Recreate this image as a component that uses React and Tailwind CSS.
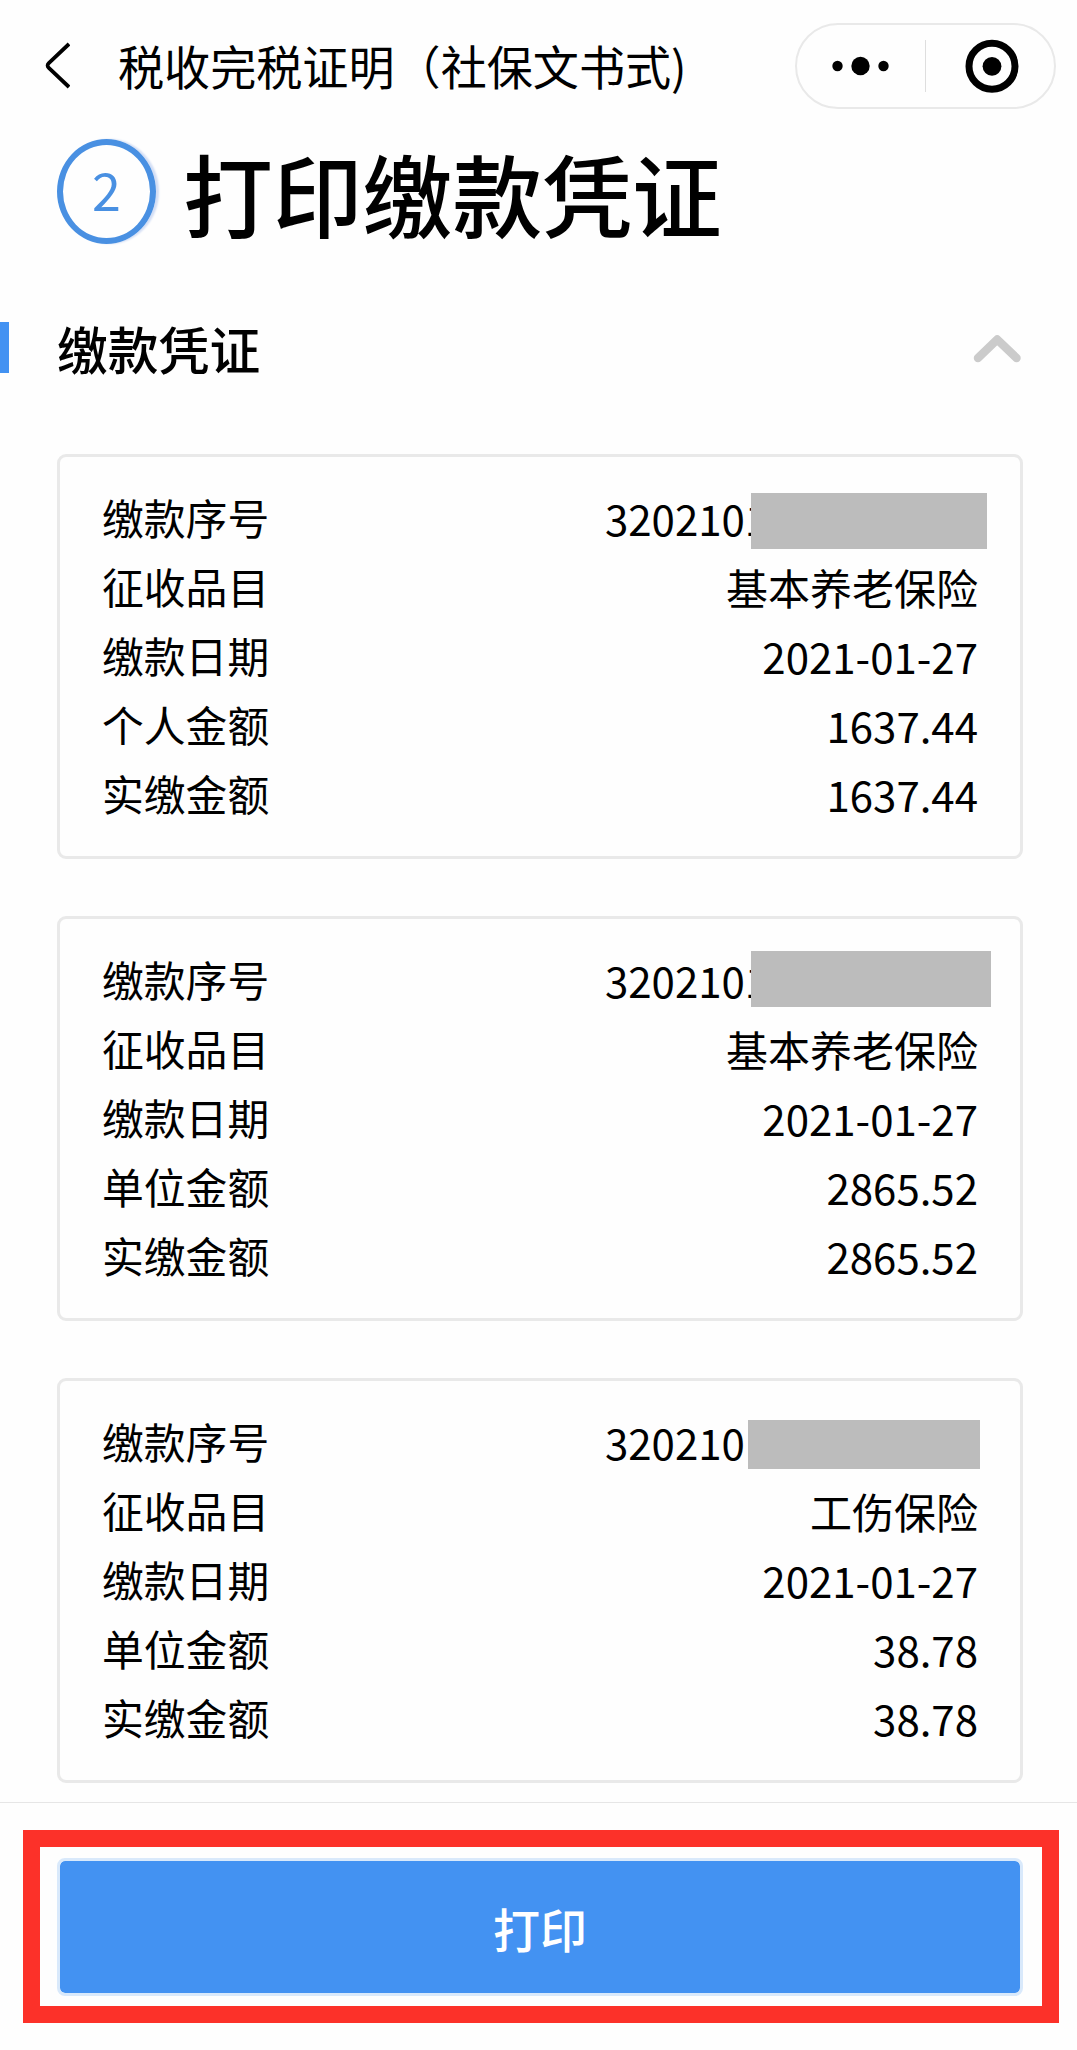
const vouchers = [
  {
    number: '3202101',
    mask: 'left-[146px] top-[10px] h-[56px] w-[236px]',
    rows: [
      ['征收品目', '基本养老保险'],
      ['缴款日期', '2021-01-27'],
      ['个人金额', '1637.44'],
      ['实缴金额', '1637.44'],
    ],
  },
  {
    number: '3202101',
    mask: 'left-[146px] top-[6px] h-[56px] w-[240px]',
    rows: [
      ['征收品目', '基本养老保险'],
      ['缴款日期', '2021-01-27'],
      ['单位金额', '2865.52'],
      ['实缴金额', '2865.52'],
    ],
  },
  {
    number: '320210',
    mask: 'left-[143px] top-[13px] h-[49px] w-[232px]',
    rows: [
      ['征收品目', '工伤保险'],
      ['缴款日期', '2021-01-27'],
      ['单位金额', '38.78'],
      ['实缴金额', '38.78'],
    ],
  },
];

function Row({ label, children }) {
  return (
    <div className="flex h-[69px] items-center justify-between pb-[3px] text-[42px] leading-[69px]">
      <span className="pt-[1px] text-[41.8px]">{label}</span>
      {children}
    </div>
  );
}

function VoucherCard({ voucher }) {
  return (
    <section className="rounded-[9px] border-[3px] border-[#e9e9e9] px-[42px] py-[27px]">
      <Row label="缴款序号">
        <span className="relative h-[69px] w-[373px]">
          {voucher.number}
          <span className={`absolute bg-[#bcbcbc] ${voucher.mask}`} />
        </span>
      </Row>
      {voucher.rows.map(([label, value]) => (
        <Row key={label} label={label}>
          <span>{value}</span>
        </Row>
      ))}
    </section>
  );
}

function Capsule() {
  return (
    <div className="flex h-[86px] w-[261px] items-center rounded-full border-2 border-[#e9e9e9]">
      <div className="flex w-[128px] items-center justify-center">
        <svg width="60" height="24" viewBox="0 0 60 24">
          <circle cx="6.5" cy="12" r="5.2" />
          <circle cx="29.5" cy="12" r="9.2" />
          <circle cx="52.5" cy="12" r="5.2" />
        </svg>
      </div>
      <div className="h-[52px] w-px bg-[#dedede]" />
      <div className="flex flex-1 items-center justify-center pl-[4px]">
        <svg width="54" height="54" viewBox="0 0 54 54">
          <circle cx="27" cy="27.3" r="23" fill="none" stroke="#000" strokeWidth="7" />
          <circle cx="27" cy="27.3" r="9.4" />
        </svg>
      </div>
    </div>
  );
}

export default function App() {
  return (
    <div className="flex h-[2050px] w-[1077px] flex-col overflow-hidden bg-[#fefefe] font-['Noto_Sans_CJK_SC',sans-serif] text-black">
      <header className="flex h-[132px] items-center pr-[21px] pl-[44px]">
        <svg className="mr-[48px]" width="26" height="48" viewBox="0 0 26 48" fill="none" stroke="#000" strokeWidth="3.8">
          <path d="M25 2 L4.8 21.2 Q2.4 23.5 4.8 25.8 L25 45" />
        </svg>
        <h1 className="flex-1 pb-[3px] text-[46.1px] leading-[60px] whitespace-nowrap">税收完税证明（社保文书式)</h1>
        <Capsule />
      </header>

      <div className="flex h-[120px] items-center pl-[57px]">
        <div className="mb-[1px] flex h-[105px] w-[99px] items-center justify-center rounded-[50%] border-[6px] border-[#4990e2] pb-[6px] text-[52px] leading-none text-[#4990e2] shadow-[3px_0_2px_#d3def5]">
          2
        </div>
        <h2 className="ml-[27px] text-[89.8px] leading-[120px] font-medium">打印缴款凭证</h2>
      </div>

      <div className="mt-[70px] flex h-[51px] items-center">
        <div className="h-[51px] w-[9px] bg-[#4392f2]" />
        <h3 className="ml-[48px] flex-1 pt-[2px] text-[50.8px] leading-[51px] font-medium">缴款凭证</h3>
        <svg className="mr-[55px]" width="50" height="32" viewBox="0 0 50 32" fill="none" stroke="#cbcbcb" strokeWidth="8.5" strokeLinecap="round" strokeLinejoin="round">
          <path d="M6 26 L25.2 7.5 L44.5 26" />
        </svg>
      </div>

      <main className="mt-[81px] flex flex-col gap-[57px] pr-[54px] pl-[57px]">
        {vouchers.map((voucher, i) => (
          <VoucherCard key={i} voucher={voucher} />
        ))}
      </main>

      <footer className="mt-[19px] border-t border-[#e6e6e6] pt-[27px] pl-[23px]">
        <div className="h-[193px] w-[1036px] border-[17px] border-[#fc3129] pt-[11px] pr-[19px] pl-[17px]">
          <button className="flex h-[138px] w-full items-center justify-center rounded-[8px] border-[3px] border-[#d9e9fb] bg-[#4392f2] bg-clip-padding pt-[2px] text-[47px] font-medium text-white">
            打印
          </button>
        </div>
      </footer>
    </div>
  );
}
